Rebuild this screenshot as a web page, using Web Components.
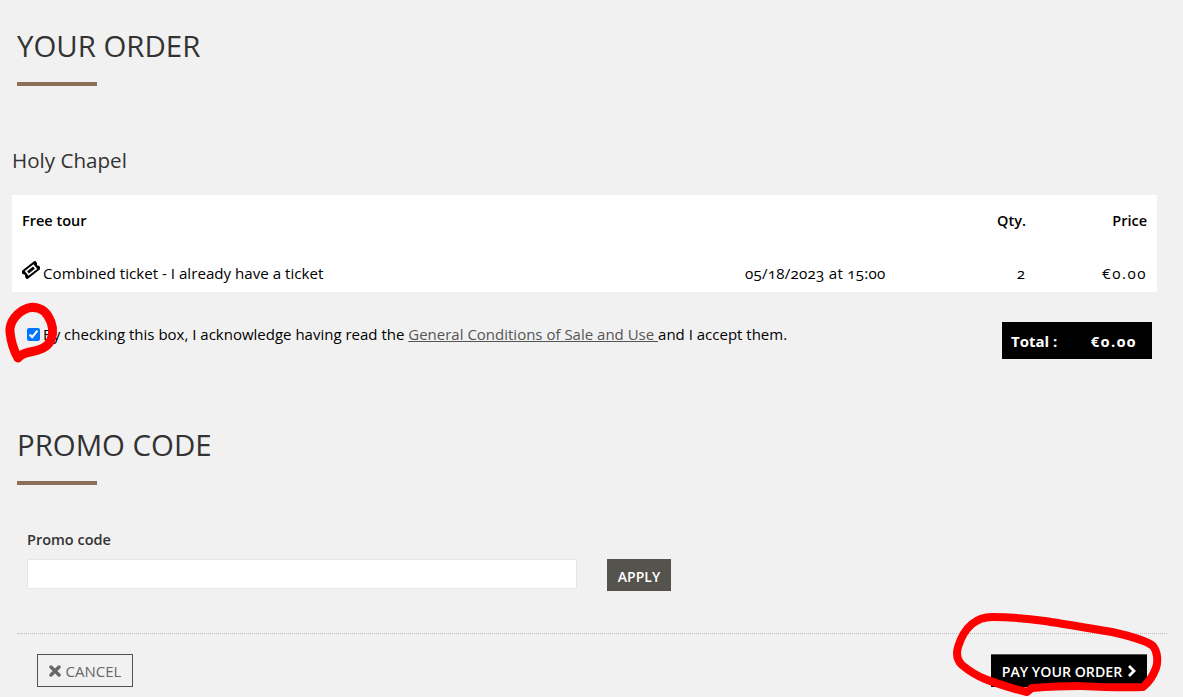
<!DOCTYPE html>
<html>
<head>
<meta charset="utf-8">
<title>Your order</title>
<style>
    html, body { margin: 0; height: 697px; overflow: hidden; }
    body { background: #f1f1f1; font-family: "Open Sans", "Noto Sans", sans-serif; color: #000; position: relative; }
    .scribble { position: absolute; left: 0; top: 0; pointer-events: none; }
</style>
</head>
<body>
<order-page></order-page>
<svg class="scribble" width="1183" height="697" fill="none" stroke="#f00" stroke-linecap="round" stroke-linejoin="round">
    <path stroke-width="9" d="M28 308C36 306 44 309 48 316C53 324 54 332 51 340C47 348 40 350 30 352C25 353 21 354 18 358C14 351 11 342 10 332C9 322 17 312 28 308Z"/>
    <path stroke-width="8" d="M992 617C1010 617 1030 619 1045 621C1070 625 1090 628 1112 632C1130 636 1146 640 1153 646C1158 652 1158 662 1156 668C1153 676 1148 683 1143 687C1120 688 1100 687 1078 686C1060 686 1045 687 1032 688L1027 692L1015 689C1005 686 995 683 985 679C975 675 968 670 962 665C957 660 956 654 958 647C961 637 966 629 972 624C978 619 985 617 992 617Z"/>
</svg>
<script>
    const sharedFont = `font-family: "Open Sans", "Noto Sans", sans-serif;`;

    class SectionTitle extends HTMLElement {
        constructor() {
            super();
            this.attachShadow({mode: "open"}).innerHTML = `
                <style>
                    :host { display: block; ${sharedFont} }
                    h2 { margin: 0; font-size: 29.4px; line-height: 38px; font-weight: 400; color: #333; }
                    .rule { width: 80px; height: 4px; background: #8b6f56; margin-top: 17px; }
                </style>
                <h2><slot></slot></h2>
                <div class="rule"></div>`;
        }
    }

    class OrderTable extends HTMLElement {
        constructor() {
            super();
            this.attachShadow({mode: "open"}).innerHTML = `
                <style>
                    :host { display: block; background: #fff; height: 97px; font-size: 15.15px; ${sharedFont} }
                    .row { display: grid; grid-template-columns: 723px 1fr 70px 121px; align-items: center; padding: 0 10px; }
                    .head { height: 52px; padding-bottom: 2px; box-sizing: border-box; font-weight: 600; font-size: 14.5px; }
                    .line { height: 45px; padding-top: 7px; box-sizing: border-box; }
                    .num { text-align: right; font-variant-numeric: oldstyle-nums; }
                    .date { letter-spacing: .25px; }
                    .price { letter-spacing: 1.5px; padding-right: 0; }
                    .name { display: flex; align-items: center; gap: 3px; white-space: nowrap; }
                    svg { display: block; margin-top: -6px; }
                </style>
                <div class="row head"><span>Free tour</span><span></span><span class="num">Qty.</span><span class="num">Price</span></div>
                <div class="row line">
                    <span class="name">
                        <svg width="18" height="18" viewBox="0 0 18 18"><g transform="rotate(-38 9 9)"><path fill="#000" d="M0 4h18v3.4a1.7 1.7 0 0 0 0 3.2V14H0v-3.4a1.7 1.7 0 0 0 0-3.2z"/><rect x="3.4" y="6" width="11.2" height="6" fill="#fff"/><rect x="5.2" y="7.6" width="7.6" height="2.8" fill="#000"/></g></svg>
                        Combined ticket - I already have a ticket
                    </span>
                    <span class="num date" style="text-align:left">05/18/2023 at 15:00</span>
                    <span class="num" style="padding-right:1px">2</span>
                    <span class="num price">€0.00</span>
                </div>`;
        }
    }

    class TermsRow extends HTMLElement {
        constructor() {
            super();
            this.attachShadow({mode: "open"}).innerHTML = `
                <style>
                    :host { display: flex; justify-content: space-between; align-items: flex-start; font-size: 15px; ${sharedFont} }
                    label { display: flex; align-items: center; padding: 31px 0 0 27px; line-height: 22px; white-space: pre; }
                    input { width: 13px; height: 13px; margin: 0 3px 0 0; accent-color: #0075ff; }
                    a { color: #555; text-decoration: underline; }
                    .total { display: flex; justify-content: space-between; align-items: center; box-sizing: border-box;
                        width: 150px; height: 37px; margin: 30px 31px 0 0; padding: 0 15px 0 9px; background: #000; color: #fff; font-weight: 700;
                        font-variant-numeric: oldstyle-nums; }
                    .total span:last-child { letter-spacing: 1.5px; }
                </style>
                <label><input type="checkbox" checked>By checking this box, I acknowledge having read the <a>General Conditions of Sale and Use </a>and I accept them.</label>
                <div class="total"><span>Total :</span><span>€0.00</span></div>`;
        }
    }

    class PromoForm extends HTMLElement {
        constructor() {
            super();
            this.attachShadow({mode: "open"}).innerHTML = `
                <style>
                    :host { display: block; padding-left: 10px; font-size: 14.5px; ${sharedFont} }
                    label { display: block; font-weight: 600; color: #333; line-height: 20px; margin-bottom: 9px; }
                    .row { display: flex; gap: 30px; }
                    input { box-sizing: border-box; width: 550px; height: 30px; margin: 0; background: #fff; border: 1px solid #e6e6e6; }
                    button { ${sharedFont} width: 64px; height: 32px; border: 0; background: #55534e; color: #fff; font-size: 14px; font-weight: 600; padding: 2px 0 0; }
                </style>
                <label for="code">Promo code</label>
                <div class="row"><input id="code" type="text"><button>APPLY</button></div>`;
        }
    }

    class ActionBar extends HTMLElement {
        constructor() {
            super();
            this.attachShadow({mode: "open"}).innerHTML = `
                <style>
                    :host { display: flex; justify-content: space-between; align-items: flex-start; border-top: 1px dotted #bbb;
                        padding: 20px 20px 0 20px; font-size: 15px; ${sharedFont} }
                    .btn { display: flex; align-items: center; gap: 5px; box-sizing: border-box; height: 33px; }
                    .cancel { width: 96px; justify-content: center; border: 1px solid #55534e; color: #666; }
                    .pay { width: 156px; justify-content: center; background: #000; color: #fff; font-weight: 600; border-top: 1px solid #55534e; white-space: nowrap; font-size: 14.2px; }
                </style>
                <div class="btn cancel">
                    <svg width="12" height="12" viewBox="0 0 12 12"><path d="M2 2l8 8M10 2l-8 8" stroke="#666" stroke-width="3.4" stroke-linecap="round"/></svg>
                    CANCEL
                </div>
                <div class="btn pay">PAY YOUR ORDER
                    <svg width="9" height="12" viewBox="0 0 9 12"><path d="M2 1l5 5-5 5" fill="none" stroke="#fff" stroke-width="2.8"/></svg>
                </div>`;
        }
    }

    class OrderPage extends HTMLElement {
        constructor() {
            super();
            this.attachShadow({mode: "open"}).innerHTML = `
                <style>
                    :host { display: block; ${sharedFont} }
                    section-title { margin-left: 17px; }
                    .first { padding-top: 27px; }
                    h3 { margin: 60px 0 21px 12px; font-size: 20.6px; line-height: 28px; font-weight: 400; color: #333; }
                    order-table { margin: 0 26px 0 12px; }
                    .promo-title { margin-top: 67px; }
                    promo-form { margin: 45px 0 0 17px; }
                    action-bar { margin: 42px 16px 0 17px; }
                </style>
                <section-title class="first">YOUR ORDER</section-title>
                <h3>Holy Chapel</h3>
                <order-table></order-table>
                <terms-row></terms-row>
                <section-title class="promo-title">PROMO CODE</section-title>
                <promo-form></promo-form>
                <action-bar></action-bar>`;
        }
    }

    customElements.define("section-title", SectionTitle);
    customElements.define("order-table", OrderTable);
    customElements.define("terms-row", TermsRow);
    customElements.define("promo-form", PromoForm);
    customElements.define("action-bar", ActionBar);
    customElements.define("order-page", OrderPage);
</script>
</body>
</html>
